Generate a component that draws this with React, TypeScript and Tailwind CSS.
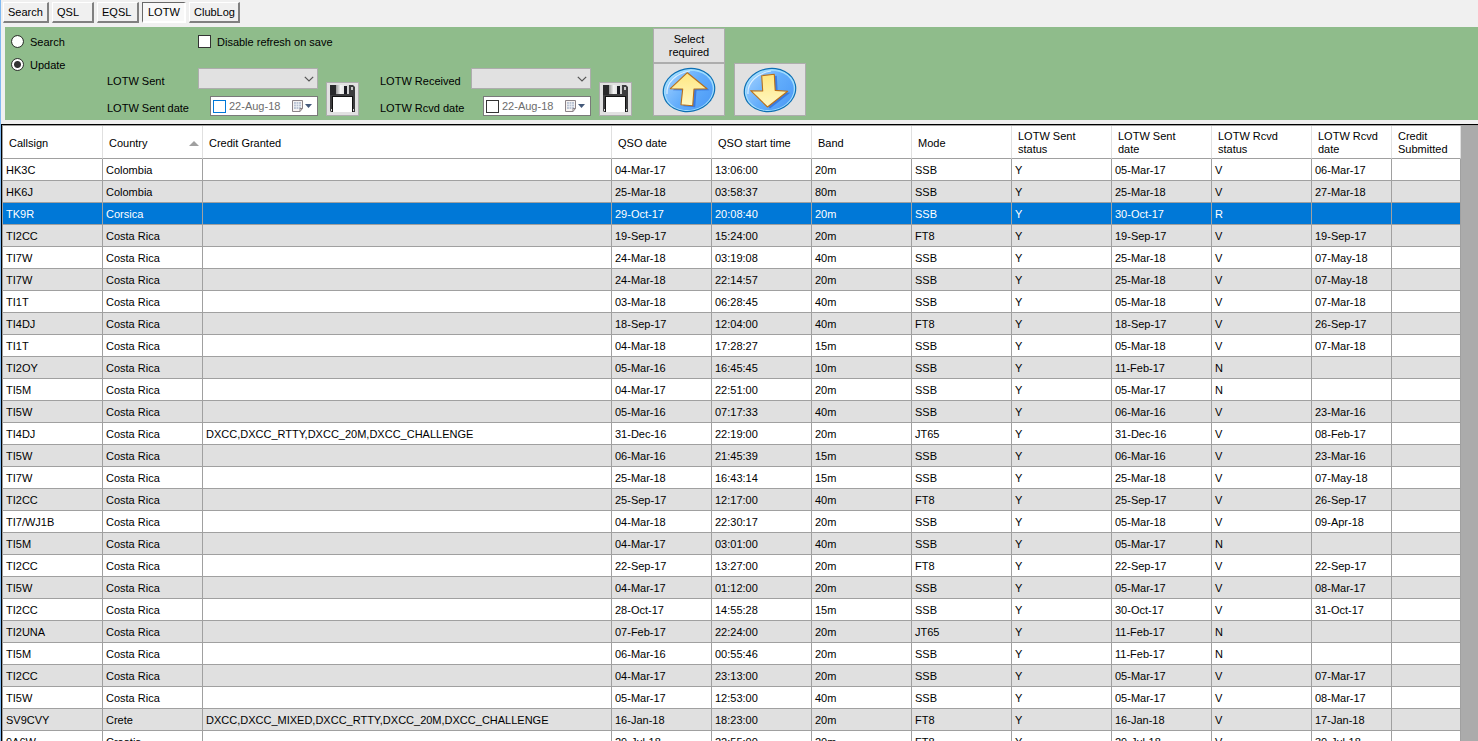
import { useState } from "react";
import type { ReactNode } from "react";

type Row = [string, string, string, string, string, string, string, string, string, string];

// callsign, country, credit granted, QSO date, start time, band, mode, sent date, rcvd status, rcvd date
const rows: Row[] = [
  ["HK3C", "Colombia", "", "04-Mar-17", "13:06:00", "20m", "SSB", "05-Mar-17", "V", "06-Mar-17"],
  ["HK6J", "Colombia", "", "25-Mar-18", "03:58:37", "80m", "SSB", "25-Mar-18", "V", "27-Mar-18"],
  ["TK9R", "Corsica", "", "29-Oct-17", "20:08:40", "20m", "SSB", "30-Oct-17", "R", ""],
  ["TI2CC", "Costa Rica", "", "19-Sep-17", "15:24:00", "20m", "FT8", "19-Sep-17", "V", "19-Sep-17"],
  ["TI7W", "Costa Rica", "", "24-Mar-18", "03:19:08", "40m", "SSB", "25-Mar-18", "V", "07-May-18"],
  ["TI7W", "Costa Rica", "", "24-Mar-18", "22:14:57", "20m", "SSB", "25-Mar-18", "V", "07-May-18"],
  ["TI1T", "Costa Rica", "", "03-Mar-18", "06:28:45", "40m", "SSB", "05-Mar-18", "V", "07-Mar-18"],
  ["TI4DJ", "Costa Rica", "", "18-Sep-17", "12:04:00", "40m", "FT8", "18-Sep-17", "V", "26-Sep-17"],
  ["TI1T", "Costa Rica", "", "04-Mar-18", "17:28:27", "15m", "SSB", "05-Mar-18", "V", "07-Mar-18"],
  ["TI2OY", "Costa Rica", "", "05-Mar-16", "16:45:45", "10m", "SSB", "11-Feb-17", "N", ""],
  ["TI5M", "Costa Rica", "", "04-Mar-17", "22:51:00", "20m", "SSB", "05-Mar-17", "N", ""],
  ["TI5W", "Costa Rica", "", "05-Mar-16", "07:17:33", "40m", "SSB", "06-Mar-16", "V", "23-Mar-16"],
  ["TI4DJ", "Costa Rica", "DXCC,DXCC_RTTY,DXCC_20M,DXCC_CHALLENGE", "31-Dec-16", "22:19:00", "20m", "JT65", "31-Dec-16", "V", "08-Feb-17"],
  ["TI5W", "Costa Rica", "", "06-Mar-16", "21:45:39", "15m", "SSB", "06-Mar-16", "V", "23-Mar-16"],
  ["TI7W", "Costa Rica", "", "25-Mar-18", "16:43:14", "15m", "SSB", "25-Mar-18", "V", "07-May-18"],
  ["TI2CC", "Costa Rica", "", "25-Sep-17", "12:17:00", "40m", "FT8", "25-Sep-17", "V", "26-Sep-17"],
  ["TI7/WJ1B", "Costa Rica", "", "04-Mar-18", "22:30:17", "20m", "SSB", "05-Mar-18", "V", "09-Apr-18"],
  ["TI5M", "Costa Rica", "", "04-Mar-17", "03:01:00", "40m", "SSB", "05-Mar-17", "N", ""],
  ["TI2CC", "Costa Rica", "", "22-Sep-17", "13:27:00", "20m", "FT8", "22-Sep-17", "V", "22-Sep-17"],
  ["TI5W", "Costa Rica", "", "04-Mar-17", "01:12:00", "20m", "SSB", "05-Mar-17", "V", "08-Mar-17"],
  ["TI2CC", "Costa Rica", "", "28-Oct-17", "14:55:28", "15m", "SSB", "30-Oct-17", "V", "31-Oct-17"],
  ["TI2UNA", "Costa Rica", "", "07-Feb-17", "22:24:00", "20m", "JT65", "11-Feb-17", "N", ""],
  ["TI5M", "Costa Rica", "", "06-Mar-16", "00:55:46", "20m", "SSB", "11-Feb-17", "N", ""],
  ["TI2CC", "Costa Rica", "", "04-Mar-17", "23:13:00", "20m", "SSB", "05-Mar-17", "V", "07-Mar-17"],
  ["TI5W", "Costa Rica", "", "05-Mar-17", "12:53:00", "40m", "SSB", "05-Mar-17", "V", "08-Mar-17"],
  ["SV9CVY", "Crete", "DXCC,DXCC_MIXED,DXCC_RTTY,DXCC_20M,DXCC_CHALLENGE", "16-Jan-18", "18:23:00", "20m", "FT8", "16-Jan-18", "V", "17-Jan-18"],
  ["9A6W", "Croatia", "", "29-Jul-18", "22:55:00", "20m", "FT8", "29-Jul-18", "V", "30-Jul-18"],
];

const columns: { label: string; width: string }[] = [
  { label: "Callsign", width: "w-[100px]" },
  { label: "Country", width: "w-[100px]" },
  { label: "Credit Granted", width: "" },
  { label: "QSO date", width: "w-[100px]" },
  { label: "QSO start time", width: "w-[100px]" },
  { label: "Band", width: "w-[100px]" },
  { label: "Mode", width: "w-[100px]" },
  { label: "LOTW Sent status", width: "w-[100px]" },
  { label: "LOTW Sent date", width: "w-[100px]" },
  { label: "LOTW Rcvd status", width: "w-[100px]" },
  { label: "LOTW Rcvd date", width: "w-[80px]" },
  { label: "Credit Submitted", width: "w-[69px]" },
];

const tabs = [
  { label: "Search", width: "w-[46px]" },
  { label: "QSL", width: "w-[42px]" },
  { label: "EQSL", width: "w-[42px]" },
  { label: "LOTW", width: "w-[44px]" },
  { label: "ClubLog", width: "w-[51px]" },
];

function Tab({ label, width, active, onClick }: { label: string; width: string; active: boolean; onClick: () => void }) {
  const look = active
    ? "border-t-[#696969] border-l-[#696969] border-r-white border-b-white bg-[#f8f8f8] pt-px pl-[5px]"
    : "border-t-white border-l-white border-r-[#808080] border-b-[#808080] bg-[#f0f0f0] pl-1";
  return (
    <button
      type="button"
      role="tab"
      aria-selected={active}
      onClick={onClick}
      className={`h-[21px] border-t border-l border-r-2 border-b-2 text-left whitespace-nowrap ${width} ${look}`}
    >
      {label}
    </button>
  );
}

function FloppyIcon() {
  return (
    <svg viewBox="0 0 26 28" className="h-7 w-[26px]" aria-hidden="true">
      <defs>
        <linearGradient id="shutter" x1="0" x2="1" y1="0" y2="0">
          <stop offset="0" stopColor="#9a9a9a" />
          <stop offset="0.35" stopColor="#f4f4f4" />
          <stop offset="1" stopColor="#cfcfcf" />
        </linearGradient>
      </defs>
      <path d="M0 0H23L25 2V27H1L0 26Z" fill="#3c3c3e" />
      <path d="M0 0H6V10H0Z" fill="#29292b" />
      <rect x="6" y="0" width="13" height="9" fill="url(#shutter)" />
      <rect x="14" y="1" width="3" height="8" fill="#1b1b22" />
      <rect x="21" y="2" width="2" height="3" fill="#c9c9c9" />
      <path d="M2 11H23V27H2Z" fill="#111" />
      <rect x="3" y="12" width="19" height="15" fill="#fff" />
      <rect x="1" y="24" width="1" height="2" fill="#ddd" />
      <rect x="23" y="24" width="1" height="2" fill="#ddd" />
    </svg>
  );
}

function ArrowIcon({ down }: { down?: boolean }) {
  const arrow = down
    ? "M18.7 8.7L31.3 7.3L32.2 23.4L44.7 24.3L24.5 40L7.7 23.7L19.7 24Z"
    : "M25.3 5.7L45 21.7L32 22L30.7 38.7L19 37.8L20.7 22L8.3 21.7Z";
  const id = down ? "disc-down" : "disc-up";
  return (
    <svg viewBox="0 0 54 46" className="h-[46px] w-[54px]" aria-hidden="true">
      <defs>
        <linearGradient id={id} x1="0" x2="1" y1="0" y2="1">
          <stop offset="0" stopColor="#a4d2ff" />
          <stop offset="0.5" stopColor="#62adfb" />
          <stop offset="1" stopColor="#4a98f6" />
        </linearGradient>
        <linearGradient id={`${id}-gold`} x1="0" x2="0" y1="0" y2="1">
          <stop offset="0" stopColor="#ffe680" />
          <stop offset="1" stopColor="#fff8c4" />
        </linearGradient>
      </defs>
      <ellipse cx="27" cy="23" rx="26.5" ry="22" transform="rotate(-12 27 23)" fill="#0d6fb4" />
      <ellipse cx="27" cy="23" rx="25.3" ry="20.8" transform="rotate(-12 27 23)" fill="#9fdcff" />
      <ellipse cx="27" cy="23.5" rx="23.8" ry="19.4" transform="rotate(-12 27 23)" fill={`url(#${id})`} />
      <path d="M5 27C4 15 15 6 28 4" fill="none" stroke="#d8efff" strokeWidth="1.2" />
      <path d={arrow} transform="translate(2.5 1.5)" fill="#2f6cd8" opacity="0.75" />
      <path d={arrow} fill={`url(#${id}-gold)`} stroke="#b9701b" strokeWidth="1.1" strokeLinejoin="round" />
    </svg>
  );
}

function CalendarIcon() {
  return (
    <svg viewBox="0 0 21 12" className="h-3 w-[21px]" aria-hidden="true">
      <path d="M0.5 0.5H10.5V8.5L8 11.5H0.5Z" fill="#f6f3f2" stroke="#8b8387" />
      <path d="M2 2H9V9H2Z" fill="#b9c2d2" />
      <path d="M2 4.3H9M2 6.6H9M4.3 2V9M6.6 2V9" stroke="#f2f4f8" strokeWidth="0.7" />
      <path d="M8 11.5V8.5H10.5" fill="none" stroke="#8b8387" />
      <path d="M13 4H20L16.5 8Z" fill="#44597a" />
    </svg>
  );
}

function Choice({ id, label, checked, onChange }: { id: string; label: string; checked: boolean; onChange: () => void }) {
  return (
    <div className="flex h-[23px] items-center gap-1.5">
      <input
        id={id}
        type="radio"
        name="mode"
        checked={checked}
        onChange={onChange}
        className="size-[13px] appearance-none rounded-full border border-[#333] bg-white bg-clip-padding checked:bg-[radial-gradient(circle,#333_0_3px,#fff_4px)]"
      />
      <label htmlFor={id} className="pt-0.5">{label}</label>
    </div>
  );
}

function DateBox({ id, accent }: { id: string; accent: string }) {
  return (
    <div className="ml-3 flex h-5 items-center border border-[#7a7a7a] bg-white pl-0.5">
      <input
        type="checkbox"
        aria-label="Set date"
        className={`size-[13px] shrink-0 appearance-none border bg-white checked:bg-[#0078d7] ${accent}`}
      />
      <input
        id={id}
        type="text"
        defaultValue="22-Aug-18"
        className="w-0 min-w-0 grow bg-transparent pl-[3px] text-[#6d6d6d] outline-none"
      />
      <button type="button" aria-label="Open calendar" className="mr-1">
        <CalendarIcon />
      </button>
    </div>
  );
}

function Group({ name, dateName, prefix, accent }: { name: string; dateName: string; prefix: string; accent: string }) {
  return (
    <div className="flex items-end gap-2">
      <div className="grid grid-cols-[91px_120px] items-center gap-y-[7px]">
        <label htmlFor={`${prefix}-status`} className="pt-1.5">{name}</label>
        <div className="relative">
          <select
            id={`${prefix}-status`}
            className="block h-[21px] w-full appearance-none border border-[#adadad] bg-[#e1e1e1] px-1 outline-none"
            defaultValue=""
          >
            <option value=""></option>
            <option>Y</option>
            <option>N</option>
            <option>R</option>
          </select>
          <svg viewBox="0 0 10 6" className="pointer-events-none absolute top-2 right-1 h-1.5 w-2.5" aria-hidden="true">
            <path d="M0.8 0.8L5 5L9.2 0.8" fill="none" stroke="#555" strokeWidth="1.2" />
          </svg>
        </div>
        <label htmlFor={`${prefix}-date`} className="pt-1">{dateName}</label>
        <DateBox id={`${prefix}-date`} accent={accent} />
      </div>
      <button
        type="button"
        aria-label={`Save ${name}`}
        className="flex h-[34px] w-[33px] items-center justify-center border border-[#adadad] bg-[#e1e1e1]"
      >
        <FloppyIcon />
      </button>
    </div>
  );
}

function PanelButton({ label, tall, children }: { label?: string; tall?: boolean; children: ReactNode }) {
  return (
    <button
      type="button"
      aria-label={label}
      className={`flex w-[72px] items-center justify-center border border-[#adadad] bg-[#e1e1e1] px-2 leading-[13px] ${tall ? "h-[53px]" : "h-[35px]"}`}
    >
      {children}
    </button>
  );
}

export default function App() {
  const [tab, setTab] = useState("LOTW");
  const [mode, setMode] = useState("update");
  const [selected, setSelected] = useState(2);

  return (
    <div className="flex h-screen flex-col overflow-hidden border-l border-[#7fb9f2] bg-[#f0f0f0] font-['Liberation_Sans',Arial,sans-serif] text-[11px] leading-[13px] text-black">
      <div role="tablist" className="flex gap-[3px] pt-0.5 pb-1 pl-0.5">
        {tabs.map((t) => (
          <Tab key={t.label} {...t} active={tab === t.label} onClick={() => setTab(t.label)} />
        ))}
      </div>

      <section className="ml-1 flex h-[93px] shrink-0 items-stretch bg-[#8fbc8b]">
        <div className="w-[102px] shrink-0 pt-[3px] pl-1.5">
          <Choice id="mode-search" label="Search" checked={mode === "search"} onChange={() => setMode("search")} />
          <Choice id="mode-update" label="Update" checked={mode === "update"} onChange={() => setMode("update")} />
        </div>
        <div className="flex shrink-0 flex-col justify-between pt-[7px] pb-1">
          <div className="ml-[91px] flex items-center gap-1.5">
            <input
              id="disable-refresh"
              type="checkbox"
              className="size-[13px] appearance-none border border-[#333] bg-white checked:bg-[#333]"
            />
            <label htmlFor="disable-refresh" className="pt-0.5">Disable refresh on save</label>
          </div>
          <div className="flex gap-[21px]">
            <Group name="LOTW Sent" dateName="LOTW Sent date" prefix="sent" accent="border-[#0078d7]" />
            <Group name="LOTW Received" dateName="LOTW Rcvd date" prefix="rcvd" accent="border-[#333]" />
          </div>
        </div>
        <div className="ml-[21px] flex shrink-0 items-end gap-[9px] pb-1">
          <div className="flex flex-col">
            <PanelButton>Select required</PanelButton>
            <PanelButton label="Move up" tall>
              <ArrowIcon />
            </PanelButton>
          </div>
          <PanelButton label="Move down" tall>
            <ArrowIcon down />
          </PanelButton>
        </div>
      </section>

      <div className="mt-1 min-h-0 grow overflow-hidden border-t border-l border-black bg-[#ababab]">
        <div className="border-t border-l border-[#a0a0a0] pr-[17px]">
          <table className="w-full table-fixed border-separate border-spacing-0">
            <thead>
              <tr className="h-[33px] bg-white">
                {columns.map((c) => (
                  <th
                    key={c.label}
                    scope="col"
                    className={`border-r border-b border-r-[#e0e0e0] border-b-[#a0a0a0] p-0 pt-0.5 pl-1.5 text-left align-middle font-normal ${c.width}`}
                  >
                    {c.label === "Country" ? (
                      <span className="flex items-center justify-between pr-[3px]">
                        {c.label}
                        <svg viewBox="0 0 10 5" className="h-[5px] w-2.5" aria-hidden="true">
                          <path d="M5 0L10 5H0Z" fill="#a0a0a0" />
                        </svg>
                      </span>
                    ) : (
                      <span className={c.label.startsWith("LOTW") ? "block max-w-[70px]" : "block"}>{c.label}</span>
                    )}
                  </th>
                ))}
              </tr>
            </thead>
            <tbody>
              {rows.map((r, i) => {
                const cells = [...r.slice(0, 7), "Y", ...r.slice(7), ""];
                const look = i === selected ? "bg-[#0078d7] text-white" : i % 2 ? "bg-[#e0e0e0]" : "bg-white";
                return (
                  <tr key={i} onClick={() => setSelected(i)} className={`h-[22px] ${look}`}>
                    {cells.map((cell, j) => (
                      <td key={j} className="border-r border-b border-[#a0a0a0] p-0 pt-0.5 pl-[3px] whitespace-nowrap">
                        {cell}
                      </td>
                    ))}
                  </tr>
                );
              })}
            </tbody>
          </table>
        </div>
      </div>
    </div>
  );
}
